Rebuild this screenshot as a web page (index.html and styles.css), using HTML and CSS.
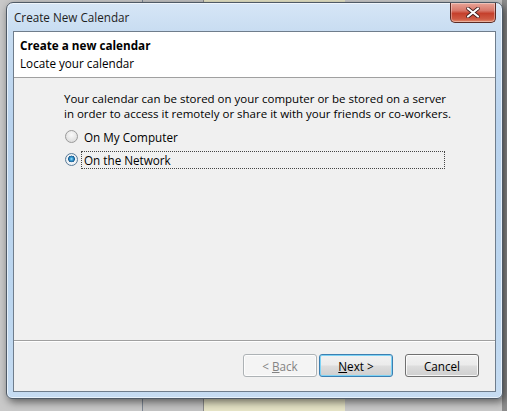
FILE: index.html
```html
<!DOCTYPE html>
<html>
<head>
<meta charset="utf-8">
<link rel="stylesheet" href="styles.css">
</head>
<body>
<div class="window">
  <div class="titlebar">
    <span class="title">Create New Calendar</span>
    <div class="close">
      <svg width="14" height="11" viewBox="0 0 14 11"><path d="M2 1.5 L12 9.5 M12 1.5 L2 9.5" stroke="#3a1a1a" stroke-width="3.6" stroke-linecap="round"/><path d="M2 1.5 L12 9.5 M12 1.5 L2 9.5" stroke="#fff" stroke-width="2.2" stroke-linecap="round"/></svg>
    </div>
  </div>
  <div class="client">
    <div class="header">
      <div class="h-title">Create a new calendar</div>
      <div class="h-sub">Locate your calendar</div>
    </div>
    <div class="content">
      <div class="desc">
        <div class="line">Your calendar can be stored on your computer or be stored on a server</div>
        <div class="line">in order to access it remotely or share it with your friends or co-workers.</div>
      </div>
      <div class="option">
        <span class="radio"></span>
        <span class="label">On My Computer</span>
      </div>
      <div class="option">
        <span class="radio checked"></span>
        <span class="label focus">On the Network</span>
      </div>
    </div>
    <div class="footer">
      <button class="btn disabled">&lt; <u>B</u>ack</button>
      <button class="btn default"><u>N</u>ext &gt;</button>
      <button class="btn cancel">Cancel</button>
    </div>
  </div>
</div>
</body>
</html>
```

FILE: styles.css
```css
html, body {
  margin: 0;
  padding: 0;
}
body {
  width: 507px;
  height: 411px;
  overflow: hidden;
  font-family: "Open Sans", "Noto Sans", sans-serif;
  font-size: 11.5px;
  color: #000;
  background:
    linear-gradient(to right, #c9c9c9 0 142px, #7d8794 142px 143px, #c3c3c3 143px 203px, #8c8c8c 203px 204px, #e6e4c6 204px 345px, #c9c9c9 345px 502px, #8d8d8d 502px);
}
.window {
  box-sizing: border-box;
  margin: 2px 0 0 6px;
  width: 497px;
  height: 397px;
  border: 1px solid #4f5a66;
  border-radius: 7px 7px 6px 6px;
  background: linear-gradient(to bottom, #d6e6f6 0, #c7dcf1 30px, #b9d3ee 120px, #bcd6ef 300px, #c6dcf2 100%);
  box-shadow: 2px 3px 8px rgba(0,0,0,0.55), inset 0 0 0 1px rgba(255,255,255,0.6);
  padding: 0 6px 6px 6px;
  display: flex;
  flex-direction: column;
}
.titlebar {
  height: 28px;
  display: flex;
  justify-content: space-between;
  align-items: flex-start;
}
.title {
  margin: 6px 0 0 1px;
  font-size: 11.7px;
  color: #1e1e1e;
}
.close {
  box-sizing: border-box;
  width: 46px;
  height: 20px;
  border: 1px solid #5a2a24;
  border-top: none;
  border-radius: 0 0 5px 5px;
  background: linear-gradient(to bottom, #e8a497 0, #d8786a 40%, #c5402c 55%, #cf5b44 85%, #e48f70 100%);
  box-shadow: inset 0 0 0 1px rgba(255,255,255,0.35);
  display: flex;
  align-items: center;
  justify-content: center;
}
.close svg { display: block; }
.client {
  flex: 1;
  border: 1px solid #6f7d8c;
  background: #f0f0f0;
  display: flex;
  flex-direction: column;
}
.header {
  height: 46px;
  background: #fff;
  border-bottom: 1px solid #a0a0a0;
  padding: 5px 0 0 6px;
  box-sizing: border-box;
}
.h-title {
  font-weight: bold;
  font-size: 11.7px;
  line-height: 17px;
}
.h-sub {
  font-size: 11.7px;
  line-height: 18px;
}
.content {
  flex: 1;
  padding: 13px 0 0 50px;
}
.desc {
  margin: 0 0 4px 0;
}
.line {
  height: 15px;
  line-height: 15px;
}
.option {
  display: flex;
  align-items: center;
  height: 23px;
}
.radio {
  box-sizing: border-box;
  width: 13px;
  height: 13px;
  margin: 0 3px 0 1px;
  border-radius: 50%;
  border: 1px solid #9a9a9a;
  background: radial-gradient(circle at 50% 35%, #fafafa 0, #e4e4e4 60%, #d6d6d6 100%);
}
.radio.checked {
  border-color: #5b7c98;
  background:
    radial-gradient(circle at 50% 45%, #a8e4ff 0, #3aa0d6 1.5px, #1a5a8e 3.2px, rgba(255,255,255,0) 3.6px),
    radial-gradient(circle, #ffffff 0, #e2e8ee 100%);
}
.label {
  line-height: 16px;
  padding: 0 2px;
  border: 1px dotted transparent;
  font-size: 11.7px;
}
.label.focus {
  border-color: #444;
  width: 358px;
}
.footer {
  height: 51px;
  border-top: 1px solid #a0a0a0;
  box-shadow: inset 0 1px 0 #fff;
  display: flex;
  justify-content: flex-end;
  align-items: flex-start;
  padding: 13px 16px 0 0;
  box-sizing: border-box;
}
.btn {
  box-sizing: border-box;
  width: 74px;
  height: 23px;
  margin-left: 2px;
  font-family: inherit;
  font-size: 11.7px;
  color: #000;
  border: 1px solid #707070;
  border-radius: 3px;
  background: linear-gradient(to bottom, #f2f2f2 0, #ebebeb 48%, #dddddd 52%, #cfcfcf 100%);
  box-shadow: inset 0 0 0 1px rgba(255,255,255,0.8);
  padding: 0;
}
.btn.disabled {
  color: #838383;
  border-color: #adb2b5;
  background: #f4f4f4;
}
.btn.default {
  border-color: #3c7fb1;
  box-shadow: inset 0 0 0 1px #7ed3f5;
}
.btn.cancel {
  margin-left: 12px;
}
```
